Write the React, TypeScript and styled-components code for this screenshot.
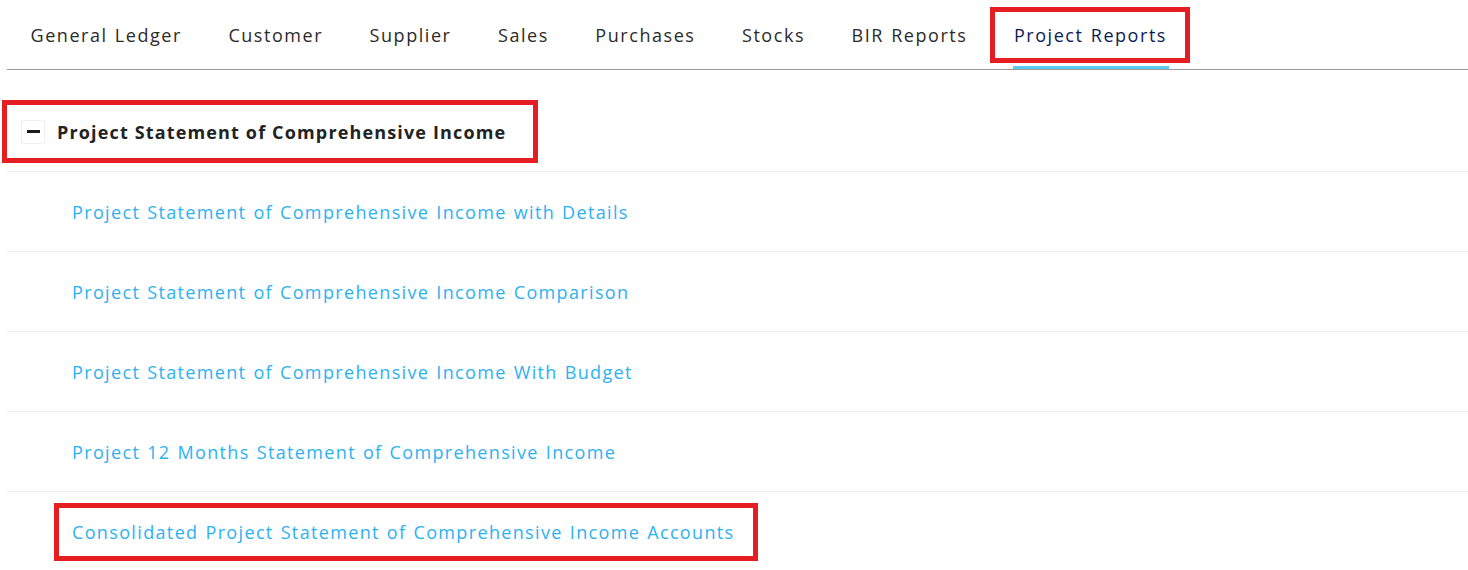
import React from 'react';
import styled, { createGlobalStyle } from 'styled-components';

const TABS = [
  'General Ledger',
  'Customer',
  'Supplier',
  'Sales',
  'Purchases',
  'Stocks',
  'BIR Reports',
  'Project Reports',
];

const REPORTS = [
  'Project Statement of Comprehensive Income with Details',
  'Project Statement of Comprehensive Income Comparison',
  'Project Statement of Comprehensive Income With Budget',
  'Project 12 Months Statement of Comprehensive Income',
  'Consolidated Project Statement of Comprehensive Income Accounts',
];

const ACTIVE_TAB = 'Project Reports';
const MARKED_REPORT = 'Consolidated Project Statement of Comprehensive Income Accounts';

export default function App() {
  return (
    <>
      <GlobalStyle />
      <Page>
        {/* 상단 탭 */}
        <TabBar>
          {TABS.map(tab => (
            <Tab key={tab} $active={tab === ACTIVE_TAB}>
              {tab}
              {tab === ACTIVE_TAB && <TabMark />}
            </Tab>
          ))}
        </TabBar>

        {/* 리포트 그룹 */}
        <Group>
          <GroupHeader>
            <Toggle>
              <Minus />
            </Toggle>
            <GroupTitle>Project Statement of Comprehensive Income</GroupTitle>
            <HeaderMark />
          </GroupHeader>
          {REPORTS.map(report => (
            <ReportRow key={report}>
              <ReportLink href="#" onClick={e => e.preventDefault()}>
                {report}
                {report === MARKED_REPORT && <LinkMark />}
              </ReportLink>
            </ReportRow>
          ))}
        </Group>
      </Page>
    </>
  );
}

const GlobalStyle = createGlobalStyle`
  html, body {
    margin: 0;
    padding: 0;
    background: #ffffff;
    overflow: hidden;
  }
  body {
    font-family: 'Open Sans', 'Liberation Sans', sans-serif;
  }
`;

const Page = styled.div`
  width: 1468px;
  height: 570px;
  padding: 7px 0 0 7px;
  box-sizing: border-box;
`;

/** 탭 바 */
const TabBar = styled.ul`
  display: flex;
  margin: 0;
  padding: 0;
  list-style: none;
  border-bottom: 1px solid #9a9a9a;
`;

const Tab = styled.li<{ $active?: boolean }>`
  position: relative;
  height: 62px;
  padding: 16px 23px 0 23.5px;
  display: flex;
  align-items: flex-start;
  box-sizing: border-box;
  font-size: 18px;
  letter-spacing: 1.55px;
  word-spacing: 1px;
  color: ${p => (p.$active ? '#0c1b55' : '#2b2b2b')};
  white-space: nowrap;

  ${p =>
    p.$active &&
    `
    &::after {
      content: '';
      position: absolute;
      left: 23px;
      right: 21px;
      bottom: 0;
      height: 3px;
      background: #5ccbef;
    }
  `}
`;

/** 표시용 빨간 테두리 */
const TabMark = styled.span`
  position: absolute;
  left: 0;
  top: 0;
  width: 100%;
  height: 56px;
  border: 5px solid #e41e22;
  box-sizing: border-box;
`;

const Group = styled.div`
  margin-top: 22px;
`;

const GroupHeader = styled.div`
  position: relative;
  height: 80px;
  display: flex;
  align-items: center;
  gap: 12px;
  padding-left: 14px;
  border-bottom: 1px solid #ececec;
  box-sizing: border-box;
`;

const HeaderMark = styled.span`
  position: absolute;
  left: -5px;
  top: 8px;
  width: 536px;
  height: 63px;
  border: 5px solid #e41e22;
  box-sizing: border-box;
`;

const Toggle = styled.span`
  width: 24px;
  height: 24px;
  display: flex;
  align-items: center;
  justify-content: center;
  border: 1px solid #eeeeee;
  border-radius: 3px;
  box-sizing: border-box;
  flex-shrink: 0;
`;

const Minus = styled.span`
  width: 13px;
  height: 3px;
  background: #1c1c1c;
`;

const GroupTitle = styled.span`
  font-size: 18px;
  font-weight: 700;
  letter-spacing: 1.15px;
  color: #222222;
  white-space: nowrap;
`;

const ReportRow = styled.div`
  height: 80px;
  display: flex;
  align-items: center;
  padding-left: 65px;
  border-bottom: 1px solid #ececec;
  box-sizing: border-box;
`;

const ReportLink = styled.a`
  position: relative;
  font-size: 18px;
  letter-spacing: 1.35px;
  word-spacing: 1px;
  color: #2cb2f2;
  text-decoration: none;
  white-space: nowrap;
`;

const LinkMark = styled.span`
  position: absolute;
  left: -18px;
  right: -23px;
  top: -17px;
  height: 58px;
  border: 5px solid #e41e22;
  box-sizing: border-box;
`;
